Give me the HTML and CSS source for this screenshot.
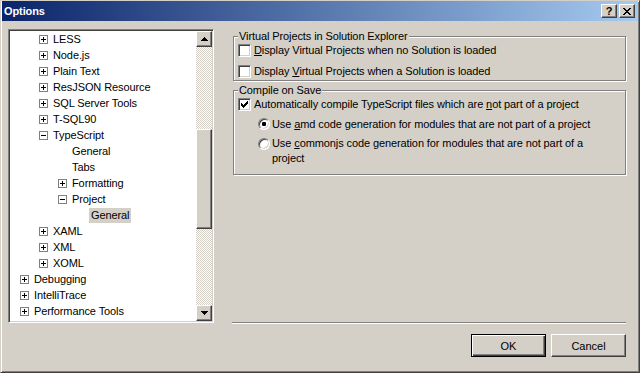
FILE: index.html
```html
<!DOCTYPE html>
<html lang="en">
<head>
  <meta charset="UTF-8">
  <meta name="viewport" content="width=device-width, initial-scale=1.0">
  <title>Options</title>
  <link rel="stylesheet" href="styles.css">
</head>
<body>
  <div class="window">
    <div class="titlebar">
      <span class="title">Options</span>
      <div class="caption-buttons">
        <button class="caption-btn raised help">?</button>
        <button class="caption-btn raised">
          <svg width="8" height="7" viewBox="0 0 8 7"><path d="M0 0h2v1H0zM6 0h2v1H6zM1 1h2v1H1zM5 1h2v1H5zM2 2h4v1H2zM3 3h2v1H3zM2 4h4v1H2zM1 5h2v1H1zM5 5h2v1H5zM0 6h2v1H0zM6 6h2v1H6z"/></svg>
        </button>
      </div>
    </div>

    <div class="dialog">
      <div class="tree-box">
        <ul class="tree">
          <li class="node lvl1"><span class="expander plus"></span><span class="label">LESS</span></li>
          <li class="node lvl1"><span class="expander plus"></span><span class="label">Node.js</span></li>
          <li class="node lvl1"><span class="expander plus"></span><span class="label">Plain Text</span></li>
          <li class="node lvl1"><span class="expander plus"></span><span class="label">ResJSON Resource</span></li>
          <li class="node lvl1"><span class="expander plus"></span><span class="label">SQL Server Tools</span></li>
          <li class="node lvl1"><span class="expander plus"></span><span class="label">T-SQL90</span></li>
          <li class="node lvl1"><span class="expander"></span><span class="label">TypeScript</span></li>
          <li class="node lvl2 leaf"><span class="label">General</span></li>
          <li class="node lvl2 leaf"><span class="label">Tabs</span></li>
          <li class="node lvl2"><span class="expander plus"></span><span class="label">Formatting</span></li>
          <li class="node lvl2"><span class="expander"></span><span class="label">Project</span></li>
          <li class="node lvl3 leaf selected"><span class="label">General</span></li>
          <li class="node lvl1"><span class="expander plus"></span><span class="label">XAML</span></li>
          <li class="node lvl1"><span class="expander plus"></span><span class="label">XML</span></li>
          <li class="node lvl1"><span class="expander plus"></span><span class="label">XOML</span></li>
          <li class="node lvl0"><span class="expander plus"></span><span class="label">Debugging</span></li>
          <li class="node lvl0"><span class="expander plus"></span><span class="label">IntelliTrace</span></li>
          <li class="node lvl0"><span class="expander plus"></span><span class="label">Performance Tools</span></li>
          <li class="node lvl0"><span class="expander plus"></span><span class="label">Database Tools</span></li>
        </ul>
        <div class="scrollbar">
          <div class="scroll-btn raised">
            <svg width="7" height="4" viewBox="0 0 7 4"><path d="M3 0h1v1H3zM2 1h3v1H2zM1 2h5v1H1zM0 3h7v1H0z"/></svg>
          </div>
          <div class="scroll-track">
            <div class="scroll-thumb raised"></div>
          </div>
          <div class="scroll-btn raised">
            <svg width="7" height="4" viewBox="0 0 7 4"><path d="M0 0h7v1H0zM1 1h5v1H1zM2 2h3v1H2zM3 3h1v1H3z"/></svg>
          </div>
        </div>
      </div>

      <div class="settings">
        <fieldset class="group">
          <legend>Virtual Projects in Solution Explorer</legend>
          <div class="options">
            <label class="option"><span class="checkbox"></span><span><u>D</u>isplay Virtual Projects when no Solution is loaded</span></label>
            <label class="option"><span class="checkbox"></span><span>Display <u>V</u>irtual Projects when a Solution is loaded</span></label>
          </div>
        </fieldset>

        <fieldset class="group compile">
          <legend>Compile on Save</legend>
          <div class="options">
            <label class="option">
              <span class="checkbox">
                <svg width="7" height="7" viewBox="0 0 7 7"><path d="M6 0h1v1H6zM5 1h2v1H5zM0 2h1v1H0zM4 2h3v1H4zM0 3h2v1H0zM3 3h3v1H3zM0 4h5v1H0zM1 5h3v1H1zM2 6h1v1H2z"/></svg>
              </span>
              <span>Automatically compile TypeScript files which are <u>n</u>ot part of a project</span>
            </label>
            <label class="option sub"><span class="radio"><span class="dot"></span></span><span>Use <u>a</u>md code generation for modules that are not part of a project</span></label>
            <label class="option sub multiline"><span class="radio"></span><span>Use <u>c</u>ommonjs code generation for modules that are not part of a<br>project</span></label>
          </div>
        </fieldset>

        <div class="footer">
          <div class="separator"></div>
          <div class="buttons">
            <button class="btn raised default">OK</button>
            <button class="btn raised">Cancel</button>
          </div>
        </div>
      </div>
    </div>
  </div>
</body>
</html>
```

FILE: styles.css
```css
* {
  margin: 0;
  padding: 0;
  box-sizing: border-box;
}

body {
  background-color: #d4d0c8;
  font-family: "Liberation Sans", Arial, sans-serif;
  font-size: 11px;
  letter-spacing: -0.1px;
  color: #000;
}

.window {
  width: 640px;
  height: 373px;
  display: flex;
  flex-direction: column;
  background-color: #d4d0c8;
  border: 1px solid;
  border-color: #d4d0c8 #404040 #404040 #d4d0c8;
  padding: 0 1px 1px;
  box-shadow: inset 1px 1px #fff, inset -1px -1px #808080;
}

/* 3D bevels */
.raised {
  background-color: #d4d0c8;
  border: 1px solid;
  border-color: #fff #404040 #404040 #fff;
  box-shadow: inset -1px -1px #808080;
}

/* title bar */
.titlebar {
  height: 20px;
  flex: none;
  display: flex;
  align-items: center;
  justify-content: space-between;
  padding: 0 3px 0 2px;
  background: linear-gradient(to right, #0a246a, #a6caf0);
}

.title {
  color: #fff;
  font-weight: bold;
  font-size: 11px;
}

.caption-buttons {
  display: flex;
  gap: 2px;
}

.caption-btn {
  width: 16px;
  height: 14px;
  display: flex;
  align-items: center;
  justify-content: center;
  font-family: inherit;
  color: #000;
}

.caption-btn.help {
  font-weight: bold;
  font-size: 11px;
  line-height: 1;
}

/* dialog body */
.dialog {
  flex: 1;
  display: flex;
  gap: 18px;
  padding: 8px 12px 14px 6px;
}

.tree-box {
  width: 206px;
  height: 294px;
  flex: none;
  display: flex;
  padding: 1px;
  border: 1px solid;
  border-color: #808080 #fff #fff #808080;
  box-shadow: inset 1px 1px #404040, inset -1px -1px #d4d0c8;
}

.tree {
  flex: 1;
  list-style: none;
  background-color: #fff;
  overflow: hidden;
}

.node {
  height: 16px;
  display: flex;
  align-items: center;
  white-space: nowrap;
}

.lvl0 { padding-left: 10px; }
.lvl1 { padding-left: 29px; }
.lvl2 { padding-left: 48px; }
.lvl3 { padding-left: 67px; }

.label {
  padding: 0 2px;
  margin-left: -2px;
  line-height: 15px;
}

.leaf .label {
  margin-left: 12px;
}

.selected .label {
  background-color: #d4d0c8;
}

.expander {
  width: 9px;
  height: 9px;
  flex: none;
  margin-right: 5px;
  border: 1px solid #808080;
  background-color: #fff;
  position: relative;
}

.expander::before {
  content: "";
  position: absolute;
  left: 1px;
  top: 3px;
  width: 5px;
  height: 1px;
  background-color: #000;
}

.expander.plus::after {
  content: "";
  position: absolute;
  left: 3px;
  top: 1px;
  width: 1px;
  height: 5px;
  background-color: #000;
}

/* scrollbar */
.scrollbar {
  width: 16px;
  flex: none;
  display: flex;
  flex-direction: column;
  background: repeating-conic-gradient(#d4d0c8 0 25%, #fff 0 50%) 0 0 / 2px 2px;
}

.scroll-btn {
  height: 16px;
  flex: none;
  display: flex;
  align-items: center;
  justify-content: center;
}

.scroll-track {
  flex: 1;
}

.scroll-thumb {
  height: 100px;
  margin-top: 82px;
}

/* settings */
.settings {
  flex: 1;
  display: flex;
  flex-direction: column;
  padding-top: 1px;
}

.group {
  margin-left: 1px;
  border: 1px solid #808080;
  box-shadow: inset 1px 1px #fff, 1px 1px #fff;
  padding: 0 4px 1px;
}

.group legend {
  line-height: 12px;
  padding: 0 1px;
  background-color: #d4d0c8;
}

.group.compile {
  margin-top: 3px;
  padding-bottom: 8px;
}

.options {
  display: flex;
  flex-direction: column;
  gap: 5px;
}

.compile .options {
  gap: 4px;
}

.option {
  height: 16px;
  display: flex;
  align-items: center;
  white-space: nowrap;
}

.option.sub {
  padding-left: 20px;
}

.option.multiline {
  height: auto;
  align-items: flex-start;
  line-height: 15px;
}

.checkbox {
  width: 13px;
  height: 13px;
  flex: none;
  margin-right: 3px;
  display: flex;
  align-items: center;
  justify-content: center;
  background-color: #fff;
  border: 1px solid;
  border-color: #808080 #fff #fff #808080;
  box-shadow: inset 1px 1px #404040, inset -1px -1px #d4d0c8;
}

.radio {
  width: 12px;
  height: 12px;
  flex: none;
  margin-right: 2px;
  display: flex;
  align-items: center;
  justify-content: center;
  background-color: #fff;
  border-radius: 50%;
  border: 1px solid;
  border-color: #808080 #fff #fff #808080;
  box-shadow: inset 1px 1px #404040, inset -1px -1px #d4d0c8;
}

.multiline .radio {
  margin-top: 2px;
}

.dot {
  width: 4px;
  height: 4px;
  border-radius: 1px;
  background-color: #000;
}

/* footer */
.footer {
  margin-top: auto;
}

.separator {
  border-top: 1px solid #808080;
  border-bottom: 1px solid #fff;
}

.buttons {
  display: flex;
  justify-content: flex-end;
  gap: 5px;
  margin-top: 10px;
}

.btn {
  width: 75px;
  height: 23px;
  font-family: inherit;
  font-size: 11px;
  color: #000;
}

.btn.default {
  border-color: #000;
  box-shadow: inset 1px 1px #fff, inset -1px -1px #404040, inset -2px -2px #808080;
}
```
